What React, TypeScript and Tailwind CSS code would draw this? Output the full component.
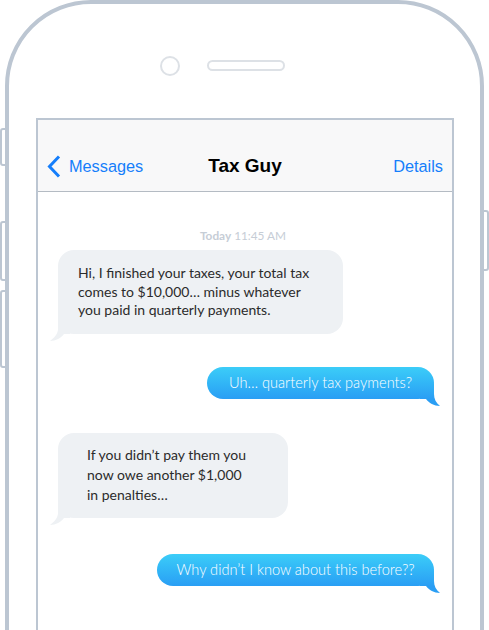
import React from "react";

const FRAME = "#bcc6d2";

const ReceivedTail = () => (
  <svg className="absolute left-[-8px] bottom-[-7px]" width="24" height="22" viewBox="0 0 24 22">
    <path d="M8 0H20V15H14C11 19 6 22 0 22C4 19 8 15 8 10Z" fill="#eef1f4" />
  </svg>
);

const SentTail = ({ id }: { id: string }) => (
  <svg className="absolute right-[-6px] bottom-[-7px]" width="24" height="22" viewBox="0 0 24 22">
    <defs>
      <linearGradient id={id} x1="0" y1="0" x2="0" y2="15" gradientUnits="userSpaceOnUse">
        <stop offset="0" stopColor="#32b4f6" />
        <stop offset="1" stopColor="#2a9ef4" />
      </linearGradient>
    </defs>
    <path d="M18 0H4V15H10C13 19 18 22 24 22C20 19 18 15 18 10Z" fill={`url(#${id})`} />
  </svg>
);

const Received = ({ lines, className }: { lines: string[]; className: string }) => (
  <div className={`relative self-start rounded-[16px] bg-[#eef1f4] text-[14px] text-[#2b2b2b] whitespace-nowrap ${className}`}>
    {lines.map((l, i) => (
      <div key={i}>{l}</div>
    ))}
    <ReceivedTail />
  </div>
);

const Sent = ({ text, id, className }: { text: string; id: string; className: string }) => (
  <div
    className={`relative self-end rounded-[16px] bg-gradient-to-b from-[#3ccdf8] to-[#2a9ef4] text-[14.6px] font-light leading-[18px] text-white text-center whitespace-nowrap py-[7px] ${className}`}
  >
    {text}
    <SentTail id={id} />
  </div>
);

const SideButton = ({ className }: { className: string }) => (
  <div className={`absolute w-[7px] border-2 rounded-l-[3px] bg-white ${className}`} style={{ borderColor: FRAME }} />
);

export default function App() {
  return (
    <div className="relative w-[489px] h-[630px] overflow-hidden bg-white" style={{ fontFamily: "Lato, 'Noto Sans', sans-serif" }}>
      {/* side buttons */}
      <SideButton className="left-0 top-[128px] h-[38px]" />
      <SideButton className="left-0 top-[221px] h-[60px]" />
      <SideButton className="left-0 top-[290px] h-[78px]" />
      <div className="absolute right-0 top-[210px] h-[61px] w-[7px] border-2 rounded-r-[3px] bg-white" style={{ borderColor: FRAME }} />

      {/* phone body */}
      <div className="relative ml-[5px] w-[479px] h-[700px] border-4 rounded-t-[86px] bg-white" style={{ borderColor: FRAME }}>
        <div className="h-[114px] flex items-start pt-[52px] pl-[151px]">
          <div className="w-[20px] h-[20px] rounded-full border-2 border-[#dde1e6]" />
          <div className="mt-[4px] ml-[27px] w-[78px] h-[11px] rounded-full border-2 border-[#dde1e6]" />
        </div>

        <div className="ml-[27px] w-[418px] h-[560px] border-2" style={{ borderColor: FRAME }}>
          {/* nav bar */}
          <div
            className="h-[72px] pt-[21px] grid grid-cols-[1fr_auto_1fr] items-center bg-[#f8f8f9] border-b border-[#b4bbc3]"
            style={{ fontFamily: "'Liberation Sans', Arial, sans-serif" }}
          >
            <div className="flex items-center pl-[9px] gap-[8px] text-[#157efb] text-[16.3px]">
              <svg width="14" height="23" viewBox="0 0 14 23">
                <path d="M12 1.5L2.5 11.5L12 21.5" fill="none" stroke="#157efb" strokeWidth="3" />
              </svg>
              <span>Messages</span>
            </div>
            <div className="text-[19px] font-bold text-black">Tax Guy</div>
            <div className="text-right pr-[9px] text-[#157efb] text-[16.3px]">Details</div>
          </div>

          {/* conversation */}
          <div className="flex flex-col pr-[18px] pl-[20px]">
            <div className="pt-[37px] pr-[6px] text-center text-[11.8px] leading-[14px] text-[#c6cdd6]">
              <span className="font-bold">Today</span> 11:45 AM
            </div>
            <Received
              className="mt-[7px] w-[285px] px-[20px] py-[14px] leading-[18.5px]"
              lines={[
                "Hi, I finished your taxes, your total tax",
                "comes to $10,000… minus whatever",
                "you paid in quarterly payments.",
              ]}
            />
            <Sent id="t1" className="mt-[33px] w-[227px]" text="Uh… quarterly tax payments?" />
            <Received
              className="mt-[34px] w-[230px] pl-[29px] py-[12.5px] leading-[20px]"
              lines={["If you didn’t pay them you", "now owe another $1,000", "in penalties…"]}
            />
            <Sent id="t2" className="mt-[36px] w-[277px]" text="Why didn’t I know about this before??" />
          </div>
        </div>
      </div>
    </div>
  );
}
